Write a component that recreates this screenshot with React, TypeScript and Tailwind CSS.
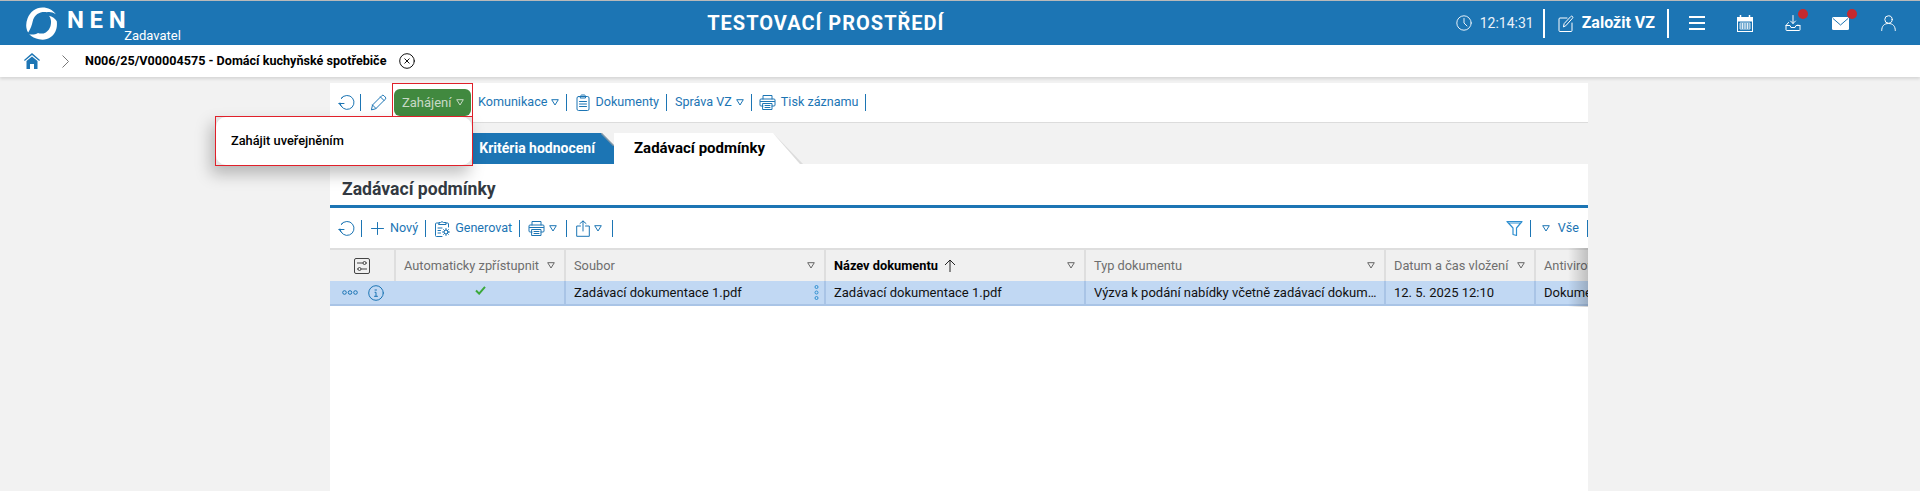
import React from "react";

const B = "#1c75b4";

function S({ w = 16, h = 16, vb = "0 0 16 16", c = B, sw = 1, children }: { w?: number; h?: number; vb?: string; c?: string; sw?: number; children: React.ReactNode }) {
  return (
    <svg width={w} height={h} viewBox={vb} fill="none" stroke={c} strokeWidth={sw} strokeLinecap="round" strokeLinejoin="round" className="shrink-0 block">
      {children}
    </svg>
  );
}

const Logo = () => (
  <svg width="32" height="33" viewBox="0 0 32 33" fill="#fff" className="shrink-0 block">
    <path d="M2.2 25.5C-.3 21.6-.4 16.2 1.6 11.2 4 5.2 9.7.6 16.5.6c5.500 0 10.500 2.600 13.300 6.600-3-2.100-6.200-2.800-9-2-1.200-.2-2.800-.3-4.300-.1C11.200 5.900 7.700 10 6.800 14c-.9 3.900-2.200 8-4.600 11.500z" />
    <path d="M3.200 27.200c3.200.6 6.400.1 8.800-1.300 2.200 1 5.200 1 7.800-.5 3.700-2.100 5.500-6.900 5.200-11.400-.2-2.200-.9-4-2.100-5.300 3.300.9 6.600 2.900 7.900 5.600.8 7.300-1.600 12.700-6 15.800-3.700 2.600-8 3-11.800 2.100-3.700-.8-7.500-2.500-9.800-5z" />
  </svg>
);

const Refresh = () => (
  <S w={17} h={17} vb="0 0 17 17">
    <path d="M3.300 4.300A7 7 0 1 1 2 9" />
    <path d="M1 9.500h5M1 9.500l2.700 3" />
    <path d="M3.300 4.300 5.300 2.700" />
  </S>
);
const Pencil = () => (
  <S w={17} h={17} vb="0 0 17 17">
    <path d="M1.500 15.500l1-4.500L11.800 1.700a1.500 1.500 0 0 1 2.100 0l1.400 1.400a1.500 1.500 0 0 1 0 2.100L6 14.500z" />
    <path d="M2.500 11l3.500 3.500M10.500 3l3.500 3.500" />
  </S>
);
const Tri = ({ c = B }: { c?: string }) => (
  <svg width="8" height="7" viewBox="0 0 8 7" fill="none" stroke={c} strokeWidth="1" className="shrink-0 block">
    <path d="M.7.7h6.600L4 6z" strokeLinejoin="round" />
  </svg>
);
const Clip = () => (
  <S w={14} h={17} vb="0 0 14 17">
    <rect x="1" y="2.500" width="12" height="14" rx="1.500" />
    <path d="M4.500 2.500c0-1 .5-1.500 1.500-1.500h2c1 0 1.500.5 1.500 1.500v1.500h-5z" />
    <path d="M3.500 7.500h7M3.500 10h7M3.500 12.500h7" />
  </S>
);
const Printer = () => (
  <S w={17} h={17} vb="0 0 17 17">
    <path d="M4 5V1.500h9V5" />
    <path d="M4 12H2a1 1 0 0 1-1-1V6a1 1 0 0 1 1-1h13a1 1 0 0 1 1 1v5a1 1 0 0 1-1 1h-2" />
    <path d="M4 9.500h9v6H4zM6 11.500h5M6 13.500h5M1.500 7.500h14" />
  </S>
);
const Plus = () => (
  <S w={13} h={13} vb="0 0 13 13">
    <path d="M6.500.5v12M.5 6.500h12" />
  </S>
);
const Gen = () => (
  <S w={17} h={17} vb="0 0 17 17">
    <path d="M5 3H2.500a1 1 0 0 0-1 1v11.500a1 1 0 0 0 1 1H8M12 3h1.500a1 1 0 0 1 1 1v3" />
    <path d="M5 4V2.500h1.500a2 2 0 0 1 3 0H12V4.500H5zM4 8h4M4 10.500h2.500M4 13h2.500" />
    <circle cx="12" cy="12" r="2" />
    <path d="M12 8.500v1.500M12 14v1.500M8.500 12H10M14 12h1.500M9.600 9.600l1 1M13.400 13.400l1 1M9.600 14.400l1-1M13.400 10.600l1-1" />
  </S>
);
const Upload = () => (
  <S w={14} h={17} vb="0 0 14 17">
    <path d="M4.500 6H.7v10.300h12.600V6H9.500" />
    <path d="M7 11V1M4 3.500 7 1l3 2.500" />
  </S>
);
const Filter = () => (
  <svg width="17" height="17" viewBox="0 0 17 17" fill="none" stroke="#2f8fd0" strokeWidth="1.200" strokeLinejoin="round" className="shrink-0 block">
    <path d="M1 1.500h15L10.500 8v7.500l-3.500-1V8zM2.500 3h12" />
  </svg>
);
const Sep = () => <div className="w-px h-[17px] bg-[#1c75b4] shrink-0" />;
const HSep = () => <div className="w-[2px] h-[29px] bg-white shrink-0" />;

function HeadCell({ w, label, active, last }: { w: string; label: string; active?: boolean; last?: boolean }) {
  return (
    <div className={`${w} shrink-0 flex items-center pl-2 pr-[9px] border-r-2 border-[#dedede] whitespace-nowrap`}>
      <span className={active ? "font-bold text-[12.800px] text-black" : "text-[12.800px] text-[#6e6e6e]"}>{label}</span>
      {active && (
        <svg width="12" height="13" viewBox="0 0 12 13" fill="none" stroke="#222" strokeWidth="1" className="ml-[6px] block">
          <path d="M6 1v12M1 6l5-5 5 5" />
        </svg>
      )}
      {!last && (
        <span className="ml-auto">
          <Tri c="#666" />
        </span>
      )}
    </div>
  );
}

function RowCell({ w, children }: { w: string; children?: React.ReactNode }) {
  return <div className={`${w} shrink-0 flex items-center pl-2 pr-1 border-r-2 border-[#a9c4e6] relative whitespace-nowrap overflow-hidden`}>{children}</div>;
}

export default function App() {
  return (
    <div className="w-[1920px] h-[491px] overflow-hidden bg-[#f2f2f2] flex flex-col font-['Roboto',sans-serif] text-[12.600px]">
      <div className="h-px bg-[#b9b9b9] shrink-0" />
      <header className="h-[44px] shrink-0 bg-[#1c75b4] flex items-center text-white relative">
        <div className="w-[400px] flex items-center pl-[26px] shrink-0">
          <Logo />
          <span className="ml-[9px] text-[24px] leading-none font-bold tracking-[5.600px] -mt-[6px]">NEN</span>
          <span className="text-[13px] leading-none -ml-[7px] mt-[24px]">Zadavatel</span>
        </div>
        <div className="flex-1 text-center text-[20px] font-bold tracking-[1px] pr-[204px]">TESTOVACÍ PROSTŘEDÍ</div>
        <div className="flex items-center shrink-0 pr-[24px]">
          <S w={16} h={16} c="#e6f0f8"><circle cx="8" cy="8" r="7.200" /><path d="M8 3.500V8l3 3" /></S>
          <span className="ml-2 text-[14px] w-[50px] text-[#eaf2f9]">12:14:31</span>
          <div className="ml-[13px]"><HSep /></div>
          <div className="ml-[13px]">
            <S w={16} h={17} vb="0 0 16 17" c="#fff"><path d="M9 3H2a1 1 0 0 0-1 1v11.500a1 1 0 0 0 1 1h11a1 1 0 0 0 1-1V8" /><path d="M5.500 11.500l.7-3L12.800 1.500c.5-.5 1.200-.5 1.700 0s.5 1.200 0 1.700L8 10.500z" /></S>
          </div>
          <span className="ml-[8px] text-[16px] font-bold">Založit VZ</span>
          <div className="ml-[12px]"><HSep /></div>
          <div className="ml-[20px] flex flex-col gap-[4px]">
            <div className="w-[16px] h-[2px] bg-white" /><div className="w-[16px] h-[2px] bg-white" /><div className="w-[16px] h-[2px] bg-white" />
          </div>
          <div className="ml-[32px]">
            <svg width="16" height="17" viewBox="0 0 16 17" className="block" fill="none" stroke="#fff">
              <rect x=".5" y="2.500" width="15" height="14" />
              <path d="M3.500 0v3M12.500 0v3" strokeWidth="1.500" />
              <path d="M1 3h14v3H1z" fill="#fff" />
              <path d="M3 8h10v6H3zM5.500 8v6M8 8v6M10.500 8v6M3 10h10M3 12h10" strokeWidth=".8" />
            </svg>
          </div>
          <div className="ml-[32px] relative">
            <S w={16} h={16} c="#fff"><path d="M8 .5v8M5.500 6 8 8.500 10.500 6" /><path d="M3.500 7.500 1 10.500v4.300a.7.7 0 0 0 .7.7h12.600a.7.7 0 0 0 .7-.7v-4.300l-2.500-.3" /><path d="M1 10.500h4l1 2h4l1-2h4" /></S>
            <div className="absolute -top-[6px] left-[13px] w-[10px] h-[10px] rounded-full bg-[#c62a2f]" />
          </div>
          <div className="ml-[31px] relative">
            <svg width="17" height="13" viewBox="0 0 17 13" className="block"><rect width="17" height="13" rx="1.500" fill="#fff" /><path d="M1 1.500 8.500 8 16 1.500" fill="none" stroke="#1c75b4" /></svg>
            <div className="absolute -top-[8px] left-[15px] w-[10px] h-[10px] rounded-full bg-[#c62a2f]" />
          </div>
          <div className="ml-[32px]">
            <S w={15} h={16} vb="0 0 15 16" c="#fff"><circle cx="7.500" cy="4.500" r="3.700" /><path d="M.7 15.500c0-4.500 2.500-7 6.800-7s6.800 2.500 6.800 7" /></S>
          </div>
        </div>
      </header>
      <nav className="h-[32px] shrink-0 bg-white flex items-center pl-[24px] shadow-[0_2px_3px_rgba(0,0,0,0.12)] relative z-10">
        <svg width="16" height="16" viewBox="0 0 16 16" className="block shrink-0" fill="#1c75b4">
          <path d="M8 0 16 7l-.8 1L8 2 .8 8 0 7z" /><path d="M2.500 8 8 3.500 13.500 8v8h-3.500v-5H6v5H2.500z" />
        </svg>
        <svg width="7" height="13" viewBox="0 0 7 13" className="ml-[22px] block shrink-0" fill="none" stroke="#777"><path d="M.5.5l6 6-6 6" /></svg>
        <span className="ml-[16px] font-bold text-[12.600px] text-black">N006/25/V00004575 - Domácí kuchyňské spotřebiče</span>
        <div className="ml-[13px]">
          <S w={16} h={16} c="#111"><circle cx="8" cy="8" r="7.300" /><path d="M5.800 5.800l4.400 4.400M10.200 5.800l-4.400 4.400" /></S>
        </div>
      </nav>
      <div className="flex-1 flex min-h-0 pl-[330px]">
        <main className="w-[1258px] shrink-0 flex flex-col pt-[6px] min-h-0">
          <div className="h-[40px] shrink-0 bg-white border-b border-[#dcdcdc] flex items-center pl-[8px] text-[#1c75b4] relative z-20">
            <Refresh />
            <div className="ml-[5px]"><Sep /></div>
            <div className="ml-[9px]"><Pencil /></div>
            <div className="relative self-start ml-[5px] h-[33px] w-[81px] border-l border-r border-t border-[#e0202a] flex items-end justify-center shrink-0">
              <div className="h-[27px] w-[77px] rounded-[6px] bg-[#41893f] flex items-center pl-[8px] gap-[4px] text-[#c8d9c6] text-[13px]">
                Zahájení <Tri c="#c8d9c6" />
              </div>
              <div className="absolute top-full -right-px w-[258px] h-[50px] border border-[#e0202a] bg-[#e5e5e5] shadow-[-4px_8px_16px_rgba(0,0,0,0.25)]">
                <div className="w-full h-full rounded-[10px] bg-white flex items-center pl-[15px] text-[12.800px] font-medium text-black">Zahájit uveřejněním</div>
              </div>
            </div>
            <span className="ml-[5px]">Komunikace</span>
            <span className="ml-[4px]"><Tri /></span>
            <div className="ml-[7px]"><Sep /></div>
            <div className="ml-[9px]"><Clip /></div>
            <span className="ml-[5px]">Dokumenty</span>
            <div className="ml-[7px]"><Sep /></div>
            <span className="ml-[8px]">Správa VZ</span>
            <span className="ml-[4px]"><Tri /></span>
            <div className="ml-[7px]"><Sep /></div>
            <div className="ml-[7px]"><Printer /></div>
            <span className="ml-[5px]">Tisk záznamu</span>
            <div className="ml-[6px]"><Sep /></div>
          </div>
          <div className="h-[10px] shrink-0" />
          <div className="h-[31px] shrink-0 flex items-stretch">
            <div className="w-[284px] shrink-0 bg-[#1c75b4] flex items-center justify-end pr-[19px] text-white font-bold text-[14px] relative whitespace-nowrap">
              Kritéria hodnocení
              <svg width="13" height="13" viewBox="0 0 13 13" className="absolute right-0 top-0 block"><path d="M0 0h13v13z" fill="#f2f2f2" /><path d="M0 0l13 13" stroke="#7f97a8" strokeWidth="1.500" /></svg>
            </div>
            <div className="w-[159px] shrink-0 bg-white flex items-center pl-[20px] font-bold text-[15px] text-black whitespace-nowrap">Zadávací podmínky</div>
            <svg width="30" height="31" viewBox="0 0 30 31" className="block shrink-0"><path d="M0 0 27 31H0z" fill="#fff" /><path d="M0 0 30 31H27z" fill="#dcdcdc" /></svg>
          </div>
          <section className="flex-1 min-h-0 bg-white flex flex-col relative">
            <h2 className="h-[41px] shrink-0 flex items-center pl-[12px] pt-[10px] text-[17.600px] font-bold text-[#333a42]">Zadávací podmínky</h2>
            <div className="h-[3px] shrink-0 bg-[#1c75b4]" />
            <div className="h-[40px] shrink-0 flex items-center pl-[8px] text-[#1c75b4]">
              <Refresh />
              <div className="ml-[6px]"><Sep /></div>
              <div className="ml-[9px]"><Plus /></div>
              <span className="ml-[6px]">Nový</span>
              <div className="ml-[7px]"><Sep /></div>
              <div className="ml-[8px]"><Gen /></div>
              <span className="ml-[4px]">Generovat</span>
              <div className="ml-[7px]"><Sep /></div>
              <div className="ml-[8px]"><Printer /></div>
              <span className="ml-[4px]"><Tri /></span>
              <div className="ml-[9px]"><Sep /></div>
              <div className="ml-[9px]"><Upload /></div>
              <span className="ml-[4px]"><Tri /></span>
              <div className="ml-[10px]"><Sep /></div>
              <div className="ml-auto"><Filter /></div>
              <div className="ml-[7px]"><Sep /></div>
              <span className="ml-[11px]"><Tri /></span>
              <span className="ml-[8px]">Vše</span>
              <div className="ml-[8px]"><Sep /></div>
            </div>
            <div className="h-[33px] shrink-0 flex bg-[#f0f0f0] border-t-2 border-[#dedede] overflow-hidden">
              <div className="w-[66px] shrink-0 flex items-center justify-center border-r-2 border-[#dedede]">
                <svg width="16" height="16" viewBox="0 0 16 16" className="block" fill="none" stroke="#444">
                  <rect x=".5" y=".5" width="15" height="15" rx="1.500" />
                  <path d="M3 5h6M12 5h1M3 11h1M7 11h6" /><circle cx="10.500" cy="5" r="1.500" /><circle cx="5.500" cy="11" r="1.500" />
                </svg>
              </div>
              <HeadCell w="w-[170px]" label="Automaticky zpřístupnit" />
              <HeadCell w="w-[260px]" label="Soubor" />
              <HeadCell w="w-[260px]" label="Název dokumentu" active />
              <HeadCell w="w-[300px]" label="Typ dokumentu" />
              <HeadCell w="w-[150px]" label="Datum a čas vložení" />
              <HeadCell w="w-[150px]" label="Antivirová kontrola" last />
            </div>
            <div className="h-[25px] shrink-0 flex bg-[#c1d8f3] border-b-2 border-[#a9c4e6] text-[13px] text-[#111] overflow-hidden">
              <div className="w-[236px] shrink-0 flex items-center pl-[12px] border-r-2 border-[#a9c4e6]">
                <svg width="16" height="5" viewBox="0 0 16 5" fill="none" stroke="#1c75b4" className="block shrink-0">
                  <circle cx="2.500" cy="2.500" r="1.800" /><circle cx="8" cy="2.500" r="1.800" /><circle cx="13.500" cy="2.500" r="1.800" />
                </svg>
                <div className="ml-[10px]">
                  <S w={16} h={16}><circle cx="8" cy="8" r="7.300" /><path d="M7 5h1.500M7 7.300h1v4M6.500 11.300h3" /></S>
                </div>
                <svg width="11" height="9" viewBox="0 0 12 10" fill="none" stroke="#3ba93b" strokeWidth="2.200" className="ml-[91px] -mt-[4px] block shrink-0"><path d="M1 5l3.500 3.500L11 1" /></svg>
              </div>
              <RowCell w="w-[260px]">
                Zadávací dokumentace 1.pdf
                <svg width="5" height="15" viewBox="0 0 5 15" fill="none" stroke="#2f8fd0" className="absolute right-[5px] top-[4px] block">
                  <circle cx="2.500" cy="2" r="1.500" /><circle cx="2.500" cy="7.500" r="1.500" /><circle cx="2.500" cy="13" r="1.500" />
                </svg>
              </RowCell>
              <RowCell w="w-[260px]">Zadávací dokumentace 1.pdf</RowCell>
              <RowCell w="w-[300px]"><span className="truncate">Výzva k podání nabídky včetně zadávací dokumentace</span></RowCell>
              <RowCell w="w-[150px]">12. 5. 2025 12:10</RowCell>
              <RowCell w="w-[150px]">Dokument je bez viru</RowCell>
            </div>
            <div className="absolute right-0 top-[84px] w-[20px] h-[59px] bg-gradient-to-r from-transparent to-black/20" />
          </section>
        </main>
      </div>
    </div>
  );
}
